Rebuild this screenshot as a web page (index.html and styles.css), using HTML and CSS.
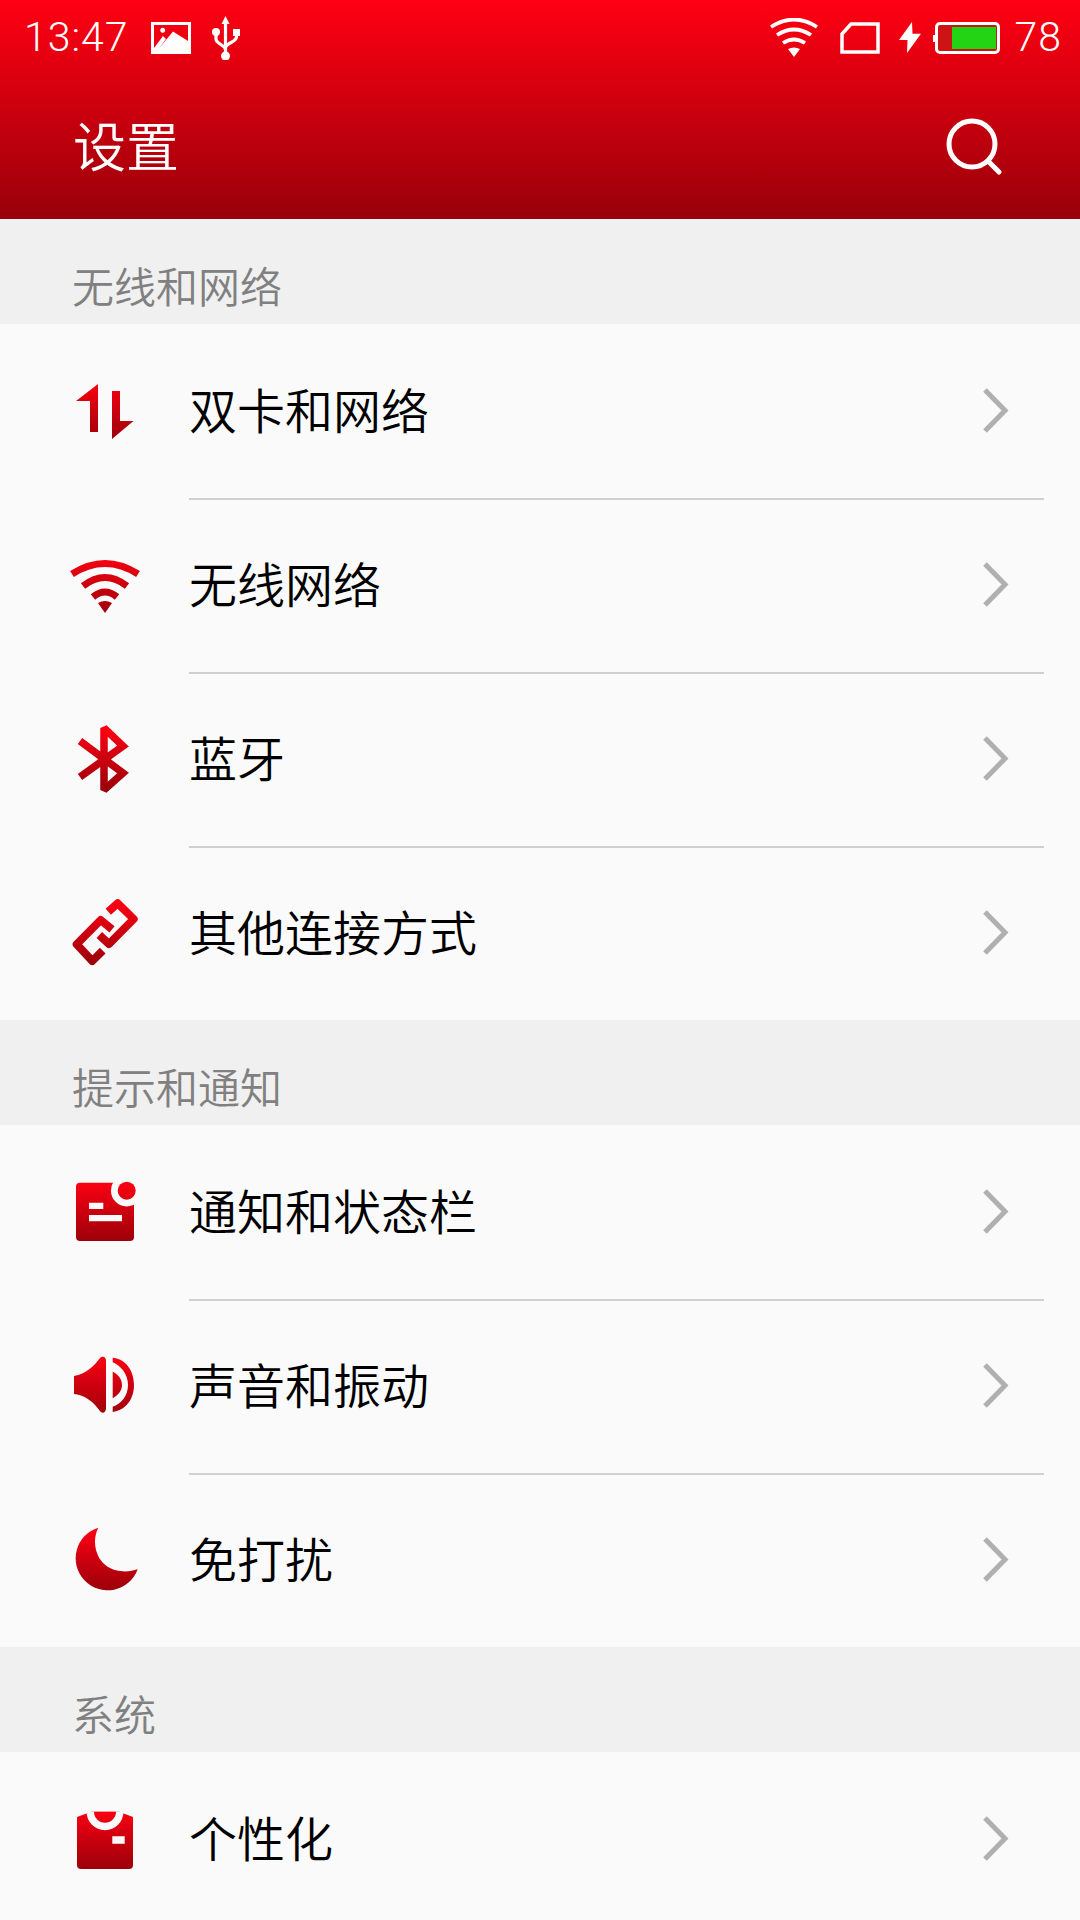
FILE: index.html
```html
<!DOCTYPE html>
<html lang="zh-CN">
<head>
    <meta charset="UTF-8">
    <meta name="viewport" content="width=device-width, initial-scale=1.0">
    <title>设置</title>
    <link rel="stylesheet" href="styles.css">
</head>
<body>
    <svg class="defs" width="0" height="0">
        <defs>
            <linearGradient id="red" gradientUnits="userSpaceOnUse" x1="0" y1="8" x2="0" y2="72">
                <stop offset="0" stop-color="#ff0012"/>
                <stop offset="1" stop-color="#98000a"/>
            </linearGradient>
        </defs>
    </svg>

    <header class="topbar">
        <div class="status">
            <span class="time">13:47</span>
            <svg class="st-image" width="40" height="32" viewBox="0 0 40 32"><path fill="#fff" fill-rule="evenodd" d="M0 0H40V32H0ZM3 3V26L12 14L15 17L7.500 27L22 9.500L37 19V3ZM11.700 5.800a2.500 2.500 0 1 1 -.01 0Z"/></svg>
            <svg class="st-usb" width="30" height="44" viewBox="0 0 30 44"><path fill="#fff" d="M14.500 0L18.500 8H10.500ZM22 13H29V20H22Z"/><circle cx="5" cy="16" r="4" fill="#fff"/><circle cx="14.500" cy="40" r="4.500" fill="#fff"/><path fill="none" stroke="#fff" stroke-width="3.200" d="M14.500 6V40M5 16V23C5 28 14.500 29 14.500 34M25.500 18V21C25.500 26 14.500 27 14.500 32"/></svg>
            <span class="spacer"></span>
            <svg class="st-wifi" width="48" height="40" viewBox="0 0 48 40"><path fill="none" stroke="#fff" stroke-width="3.800" d="M1 9Q24 -6 47 9M7 17Q24 6 41 17M13 25Q24 18 35 25"/><path fill="#fff" d="M18 31Q24 28 30 31L24 39Z"/></svg>
            <svg class="st-sim" width="40" height="32" viewBox="0 0 40 32"><path fill="none" stroke="#fff" stroke-width="3.500" d="M2 30V12L11 2H38V30Z"/></svg>
            <svg class="st-bolt" width="22" height="32" viewBox="0 0 22 32"><path fill="#fff" d="M13 0L0 18H8.500L8 31L22 11.700H13.500Z"/></svg>
            <div class="battery"><div class="battery-fill"></div></div>
            <span class="level">78</span>
        </div>
        <div class="titlebar">
            <h1 class="title">设置</h1>
            <svg class="search" width="60" height="60" viewBox="0 0 60 60"><circle cx="26" cy="26" r="23" fill="none" stroke="#fff" stroke-width="5"/><path fill="none" stroke="#fff" stroke-width="5" stroke-linecap="round" d="M42 43L53 54"/></svg>
        </div>
    </header>

    <section class="group">
        <h2 class="group-title">无线和网络</h2>
        <div class="row">
            <svg class="icon" viewBox="0 0 80 80"><path fill="url(#red)" d="M34 13L12 30H26V61H34ZM48 20H56V50H69.500L48 68Z"/></svg>
            <div class="row-body"><span>双卡和网络</span><svg class="arrow" viewBox="0 0 30 48"><path d="M5 3L25 23.500L5 44"/></svg></div>
        </div>
        <div class="row">
            <svg class="icon" viewBox="0 0 80 80"><path fill="none" stroke="url(#red)" stroke-width="7" d="M8 29Q41 8 74 29M19 41Q41 24 63 41M29 52Q41 42 53 52"/><path fill="url(#red)" d="M34 58Q41 54 48 58L41 68Z"/></svg>
            <div class="row-body"><span>无线网络</span><svg class="arrow" viewBox="0 0 30 48"><path d="M5 3L25 23.500L5 44"/></svg></div>
        </div>
        <div class="row">
            <svg class="icon" viewBox="0 0 80 80"><path fill="none" stroke="url(#red)" stroke-width="7.500" stroke-miterlimit="2" d="M16 22L59 54L40 71V9L59 27L16 58"/></svg>
            <div class="row-body"><span>蓝牙</span><svg class="arrow" viewBox="0 0 30 48"><path d="M5 3L25 23.500L5 44"/></svg></div>
        </div>
        <div class="row">
            <svg class="icon" viewBox="0 0 80 80"><path fill="none" stroke="url(#red)" stroke-width="8" stroke-linejoin="round" d="M44.300 18.700L53.700 10.300L69.700 26L45 51L35.300 42M48 36.300L36.700 27L12.700 51.300L28.300 68L38.700 57.700"/></svg>
            <div class="row-body"><span>其他连接方式</span><svg class="arrow" viewBox="0 0 30 48"><path d="M5 3L25 23.500L5 44"/></svg></div>
        </div>
    </section>

    <section class="group">
        <h2 class="group-title">提示和通知</h2>
        <div class="row">
            <svg class="icon" viewBox="0 0 80 80"><rect x="12" y="10.700" width="58" height="58.300" rx="4" fill="url(#red)"/><circle cx="62.700" cy="18.700" r="15.700" fill="#fafafa"/><circle cx="62.700" cy="18.700" r="9" fill="url(#red)"/><path fill="#fafafa" d="M25 30.700H39.300V37H25ZM25 43H58V49.300H25Z"/></svg>
            <div class="row-body"><span>通知和状态栏</span><svg class="arrow" viewBox="0 0 30 48"><path d="M5 3L25 23.500L5 44"/></svg></div>
        </div>
        <div class="row">
            <svg class="icon" viewBox="0 0 80 80"><path fill="url(#red)" d="M10 30C22 28 30 20 36 12C38 10 42 10 42 15V62C42 67 38 68 36 65C30 57 22 49 10 48ZM48.700 11.700C62 13 70 25 70 39C70 53 62 64 48.700 66V60.700C57 58 64 50 64 39C64 28 57 20 48.700 16.300ZM48.700 25.700C54 28 58 33 58 39C58 45 54 49 48.700 52.300Z"/></svg>
            <div class="row-body"><span>声音和振动</span><svg class="arrow" viewBox="0 0 30 48"><path d="M5 3L25 23.500L5 44"/></svg></div>
        </div>
        <div class="row">
            <svg class="icon" viewBox="0 0 80 80"><path fill="url(#red)" d="M34.300 7.700A32 32 0 1 0 73.700 49.300C60 54 38 52 32 30C30 22 31 14 34.300 7.700Z"/></svg>
            <div class="row-body"><span>免打扰</span><svg class="arrow" viewBox="0 0 30 48"><path d="M5 3L25 23.500L5 44"/></svg></div>
        </div>
    </section>

    <section class="group">
        <h2 class="group-title">系统</h2>
        <div class="row">
            <svg class="icon" viewBox="0 0 80 80"><path fill="url(#red)" d="M13 18L27 12.700H55L69 18V66a4 4 0 0 1 -4 4H17a4 4 0 0 1 -4 -4Z"/><path fill="#fafafa" d="M22.500 12.700A18.500 18.500 0 0 0 59.500 12.700ZM48.300 37.300H60.700V44.700H48.300Z"/><path fill="url(#red)" d="M30 12.700A11 11 0 0 0 52 12.700Z"/></svg>
            <div class="row-body"><span>个性化</span><svg class="arrow" viewBox="0 0 30 48"><path d="M5 3L25 23.500L5 44"/></svg></div>
        </div>
    </section>
</body>
</html>
```

FILE: styles.css
```css
html, body { margin: 0; padding: 0; }
body { width: 1080px; height: 1920px; overflow: hidden; background: #fafafa; font-family: "Noto Sans CJK SC", Roboto, sans-serif; }
.defs { position: absolute; }

.topbar { height: 219px; background: linear-gradient(#ff0012, #98000a); color: #fff; }
.status { height: 76px; display: flex; align-items: center; padding: 0 18px 0 24px; }
.time, .level { font-family: Roboto, sans-serif; font-size: 41px; font-weight: 300; letter-spacing: 1px; padding-bottom: 2px; }
.st-image { margin-left: 22px; }
.st-usb { margin-left: 20px; margin-top: -1px; }
.spacer { flex: 1; }
.st-sim { margin-left: 22px; }
.st-bolt { margin-left: 19px; }
.battery { position: relative; width: 65px; height: 32px; margin-left: 14px; border: 3px solid #fff; border-radius: 5px; padding: 2px 1px; box-sizing: border-box; background: #cc1414; display: flex; justify-content: flex-end; }
.battery::before { content: ""; position: absolute; left: -5px; top: 10px; width: 2px; height: 7px; background: #fff; }
.battery-fill { width: 44px; height: 100%; background: #22d414; }
.level { margin-left: 15px; }
.titlebar { height: 143px; display: flex; align-items: center; justify-content: space-between; padding: 0 74px 0 73px; }
.title { margin: -6px 0 0; font-size: 53px; font-weight: 350; line-height: 1; }

.group-title { height: 105px; margin: 0; box-sizing: border-box; padding: 40px 0 0 72px; background: #f0f0f0; color: #808080; font-size: 42px; font-weight: 350; line-height: 52px; }
.row { height: 174px; display: flex; align-items: center; padding-left: 64px; }
.icon { width: 80px; height: 80px; flex: none; }
.row-body { flex: 1; height: 100%; margin: 0 36px 0 45px; display: flex; align-items: center; justify-content: space-between; border-top: 2px solid #d0d0d0; box-sizing: border-box; font-size: 48px; color: #000; font-weight: 350; }
.row:first-of-type .row-body { border-top-color: transparent; }
.row-body span { margin-bottom: 8px; }
.arrow { width: 30px; height: 48px; margin-right: 34px; margin-bottom: 2px; fill: none; stroke: #b0b0b0; stroke-width: 5; }
```
